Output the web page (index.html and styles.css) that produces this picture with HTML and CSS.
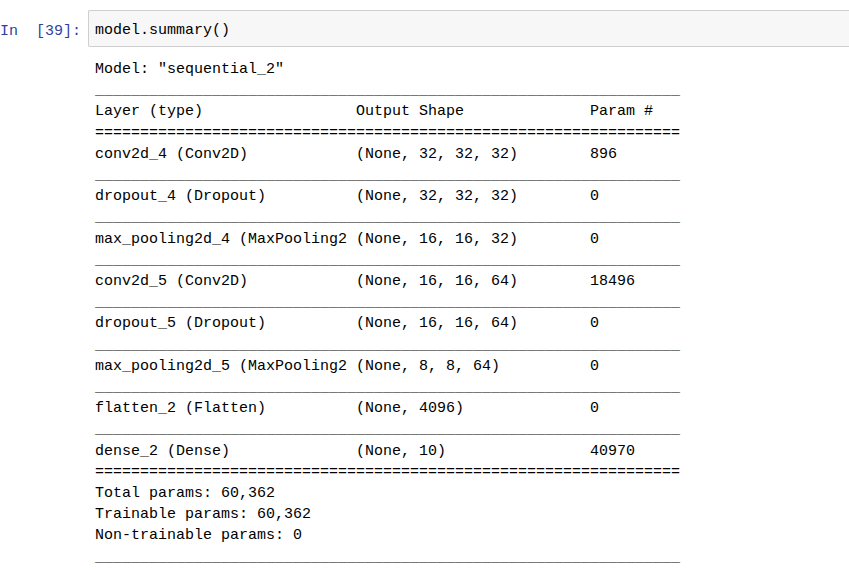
FILE: index.html
```html
<!DOCTYPE html>
<html>
<head>
<meta charset="utf-8">
<link rel="stylesheet" href="styles.css">
</head>
<body>
<div class="cell">
  <div class="input-row">
    <div class="prompt">In&nbsp;&nbsp;[39]:</div>
    <div class="input-box"><span class="code">model.summary()</span></div>
  </div>
  <div class="output-row">
<pre class="output">Model: "sequential_2"
_________________________________________________________________
Layer (type)                 Output Shape              Param #
=================================================================
conv2d_4 (Conv2D)            (None, 32, 32, 32)        896
_________________________________________________________________
dropout_4 (Dropout)          (None, 32, 32, 32)        0
_________________________________________________________________
max_pooling2d_4 (MaxPooling2 (None, 16, 16, 32)        0
_________________________________________________________________
conv2d_5 (Conv2D)            (None, 16, 16, 64)        18496
_________________________________________________________________
dropout_5 (Dropout)          (None, 16, 16, 64)        0
_________________________________________________________________
max_pooling2d_5 (MaxPooling2 (None, 8, 8, 64)          0
_________________________________________________________________
flatten_2 (Flatten)          (None, 4096)              0
_________________________________________________________________
dense_2 (Dense)              (None, 10)                40970
=================================================================
Total params: 60,362
Trainable params: 60,362
Non-trainable params: 0
_________________________________________________________________</pre>
  </div>
</div>
</body>
</html>
```
FILE: styles.css
```css
html, body {
  margin: 0;
  padding: 0;
  background: #ffffff;
}
body {
  font-family: "Liberation Mono", "DejaVu Sans Mono", monospace;
  font-size: 15px;
  color: #000;
  overflow: hidden;
}
.cell {
  padding-top: 10px;
}
.input-row {
  display: flex;
  align-items: flex-start;
}
.prompt {
  width: 88px;
  flex: none;
  box-sizing: border-box;
  padding-top: 11px;
  padding-right: 7px;
  text-align: left;
  color: #303F9F;
  line-height: 21px;
  white-space: nowrap;
}
.input-box {
  flex: 1;
  height: 35px;
  box-sizing: content-box;
  background: #f7f7f7;
  border: 1px solid #cfcfcf;
  border-right: none;
  border-radius: 2px 0 0 2px;
  padding-left: 6px;
}
.code {
  display: block;
  padding-top: 9px;
  line-height: 21px;
}
.output-row {
  padding-left: 95px;
  padding-top: 12px;
}
.output {
  margin: 0;
  font-family: inherit;
  font-size: 15px;
  line-height: 21.2px;
  white-space: pre;
  color: #000;
}
```
